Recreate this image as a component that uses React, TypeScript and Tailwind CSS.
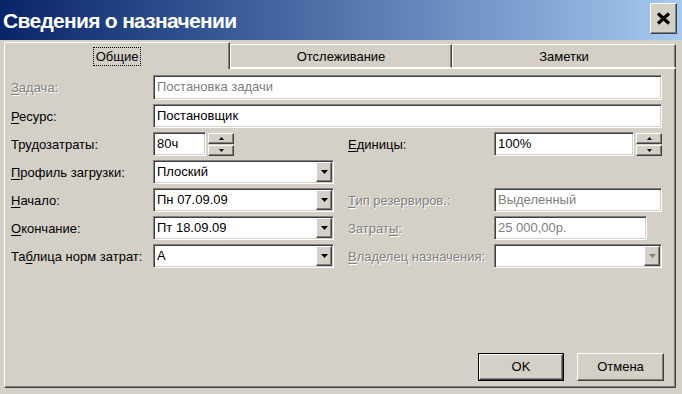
const font = "font-['Liberation_Sans',Arial,sans-serif]";

const sunken =
  "border border-t-[#808080] border-l-[#808080] border-b-white border-r-white shadow-[inset_1px_1px_0_#404040,inset_-1px_-1px_0_#d4d0c8]";
const raised =
  "border border-t-white border-l-white border-b-[#404040] border-r-[#404040] shadow-[inset_-1px_-1px_0_#808080]";

function Label({
  pre = "",
  u,
  post,
  disabled,
  className = "",
}: {
  pre?: string;
  u: string;
  post: string;
  disabled?: boolean;
  className?: string;
}) {
  return (
    <span
      className={`text-[13px] leading-none whitespace-nowrap ${
        disabled ? "text-[#808080] [text-shadow:1px_1px_0_#fff]" : "text-black"
      } ${className}`}
    >
      {pre}
      <u className="underline-offset-2">{u}</u>
      {post}
    </span>
  );
}

function TextBox({ value, disabled, className = "" }: { value: string; disabled?: boolean; className?: string }) {
  return (
    <div className={`${sunken} bg-white h-full flex items-start pt-[3px] pl-[3px] ${className}`}>
      <span className={`text-[13px] leading-[15px] ${disabled ? "text-[#808080]" : "text-black"}`}>{value}</span>
    </div>
  );
}

function Arrow({ up, size = 7, color = "#000" }: { up?: boolean; size?: number; color?: string }) {
  const h = Math.ceil(size / 2);
  return (
    <svg width={size} height={h} viewBox={`0 0 ${size} ${h}`}>
      <polygon points={up ? `0,${h} ${size},${h} ${size / 2},0` : `0,0 ${size},0 ${size / 2},${h}`} fill={color} />
    </svg>
  );
}

function Combo({ value, disabled, className = "" }: { value: string; disabled?: boolean; className?: string }) {
  return (
    <div className={`${sunken} bg-white h-full flex items-stretch p-[1px] ${className}`}>
      <div className="flex-1 flex items-start pt-[2px] pl-[2px]">
        <span className="text-[13px] leading-[15px] text-black">{value}</span>
      </div>
      <div className={`${raised} w-[16px] bg-[#d4d0c8] flex items-center justify-center`}>
        <Arrow color={disabled ? "#808080" : "#000"} />
      </div>
    </div>
  );
}

function Spinner() {
  return (
    <div className="flex flex-col gap-[1px] w-[26px]">
      <div className={`${raised} h-[11px] bg-[#d4d0c8] flex items-center justify-center`}>
        <Arrow up size={5} />
      </div>
      <div className={`${raised} h-[11px] bg-[#d4d0c8] flex items-center justify-center`}>
        <Arrow size={5} />
      </div>
    </div>
  );
}

function Tab({ label, active, className = "" }: { label: string; active?: boolean; className?: string }) {
  return (
    <div
      className={`${className} relative flex items-center justify-center bg-[#d4d0c8] border-t border-l border-t-white border-l-white border-r border-r-[#404040] shadow-[inset_-1px_0_0_#808080] ${
        active ? "h-[27px] -mb-[1px] z-10 rounded-tl-[2px]" : "h-[24px] border-b border-b-white"
      }`}
    >
      <span
        className={`text-[13px] leading-none text-black ${
          active ? "border border-dotted border-black px-[2px] py-[2px]" : ""
        }`}
      >
        {label}
      </span>
    </div>
  );
}

export default function App() {
  return (
    <div className={`w-[682px] h-[394px] bg-[#d4d0c8] flex flex-col overflow-hidden ${font}`}>
      {/* Title bar */}
      <div className="h-[40px] flex items-start justify-between pl-[3px] pr-[5px] bg-gradient-to-r from-[#0a246a] to-[#a6caf0]">
        <span className="text-white font-bold text-[21px] leading-none mt-[10px] tracking-[-0.7px]">
          Сведения о назначении
        </span>
        <div className={`${raised} mt-[3px] w-[27px] h-[31px] bg-[#d4d0c8] flex items-center justify-center`}>
          <svg width="15" height="13" viewBox="0 0 15 13">
            <path d="M2 1.5 L13 11.5 M13 1.5 L2 11.5" stroke="#000" strokeWidth="3.2" />
          </svg>
        </div>
      </div>

      {/* Body */}
      <div className="flex-1 flex flex-col pl-[4px] pr-[6px] pt-[2px] pb-[6px]">
        {/* Tabs */}
        <div className="flex items-end h-[26px]">
          <Tab label="Общие" active className="w-[226px]" />
          <Tab label="Отслеживание" className="w-[222px]" />
          <Tab label="Заметки" className="w-[224px]" />
        </div>

        {/* Panel */}
        <div className="flex-1 flex flex-col bg-[#d4d0c8] border border-t-white border-l-white border-b-[#404040] border-r-[#404040] shadow-[inset_-1px_-1px_0_#808080] pl-[6px] pt-[6px] pr-[11px] pb-[6px]">
          <div className="flex flex-col gap-[4px]">
            <div className="flex items-center h-[25px]">
              <Label u="З" post="адача:" disabled className="w-[142px]" />
              <TextBox value="Постановка задачи" disabled className="w-[509px]" />
            </div>
            <div className="flex items-center h-[24px]">
              <Label u="Р" post="есурс:" className="w-[142px]" />
              <TextBox value="Постановщик" className="w-[509px]" />
            </div>
            <div className="flex items-center h-[24px]">
              <Label pre="Тру" u="д" post="озатраты:" className="w-[142px]" />
              <div className="w-[181px] h-full flex items-center gap-[2px]">
                <TextBox value="80ч" className="w-[53px]" />
                <Spinner />
              </div>
              <div className="w-[14px]" />
              <Label u="Е" post="диницы:" className="w-[146px]" />
              <div className="w-[168px] h-full flex items-center gap-[2px]">
                <TextBox value="100%" className="w-[140px]" />
                <Spinner />
              </div>
            </div>
            <div className="flex items-center h-[24px]">
              <Label u="П" post="рофиль загрузки:" className="w-[142px]" />
              <Combo value="Плоский" className="w-[181px]" />
            </div>
            <div className="flex items-center h-[24px]">
              <Label u="Н" post="ачало:" className="w-[142px]" />
              <Combo value="Пн 07.09.09" className="w-[181px]" />
              <div className="w-[14px]" />
              <Label u="Т" post="ип резервиров.:" disabled className="w-[146px]" />
              <TextBox value="Выделенный" disabled className="w-[168px]" />
            </div>
            <div className="flex items-center h-[24px]">
              <Label u="О" post="кончание:" className="w-[142px]" />
              <Combo value="Пт 18.09.09" className="w-[181px]" />
              <div className="w-[14px]" />
              <Label pre="Затрат" u="ы" post=":" disabled className="w-[146px]" />
              <TextBox value="25 000,00р." disabled className="w-[153px]" />
            </div>
            <div className="flex items-center h-[24px]">
              <Label pre="Та" u="б" post="лица норм затрат:" className="w-[142px]" />
              <Combo value="A" className="w-[181px]" />
              <div className="w-[14px]" />
              <Label u="В" post="ладелец назначения:" disabled className="w-[146px]" />
              <Combo value="" disabled className="w-[168px]" />
            </div>
          </div>

          {/* Buttons */}
          <div className="mt-auto flex justify-end gap-[13px]">
            <button className="w-[86px] h-[28px] border border-black bg-[#d4d0c8] p-0">
              <div className={`${raised} h-full flex items-center justify-center text-[13px] text-black`}>OK</div>
            </button>
            <button className={`${raised} w-[87px] h-[28px] bg-[#d4d0c8] flex items-center justify-center text-[13px] text-black`}>
              Отмена
            </button>
          </div>
        </div>
      </div>
    </div>
  );
}
